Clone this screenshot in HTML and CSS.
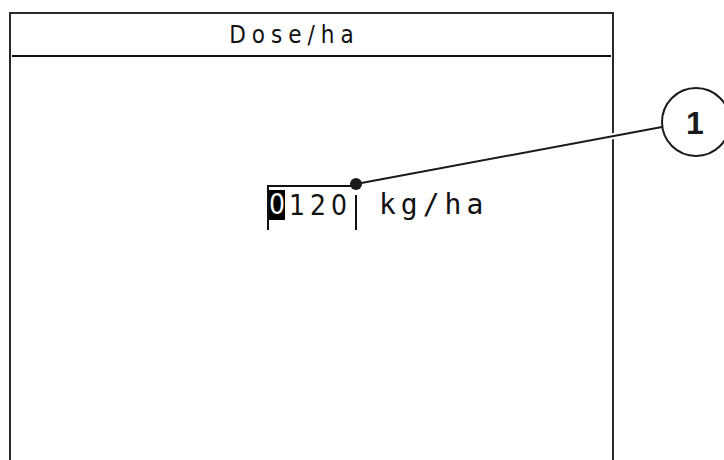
FILE: index.html
```html
<!DOCTYPE html>
<html lang="en">
<head>
  <meta charset="UTF-8">
  <meta name="viewport" content="width=device-width, initial-scale=1.0">
  <title>Dose/ha</title>
  <link rel="stylesheet" href="styles.css">
</head>
<body>
  <!-- Terminal screen -->
  <div class="screen">
    <div class="screen-title">Dose/ha</div>
    <div class="screen-body">
      <div class="entry">
        <div class="field"><span class="sel">0</span><span class="digits">120</span></div>
        <div class="cursor"></div>
        <div class="unit">kg/ha</div>
      </div>
    </div>
  </div>

  <!-- Callout -->
  <svg class="callout" width="724" height="460" viewBox="0 0 724 460">
    <line x1="356" y1="184" x2="662" y2="127" stroke="#fff" stroke-width="6"/>
    <line x1="356" y1="184" x2="662" y2="127" stroke="#1a1a1a" stroke-width="2"/>
    <circle cx="356" cy="184" r="6" fill="#1a1a1a"/>
    <circle cx="696" cy="122" r="34" fill="#fff" stroke="#1a1a1a" stroke-width="2"/>
    <text x="695" y="134" text-anchor="middle" class="callout-num">1</text>
  </svg>
</body>
</html>
```

FILE: styles.css
```css
body {
  margin: 0;
  background: #fff;
  font-family: "DejaVu Sans Condensed", "DejaVu Sans", sans-serif;
  color: #111;
}
.screen {
  margin: 12px 0 0 9px;
  width: 605px;
  height: 460px;
  box-sizing: border-box;
  border: 2px solid #2b2b2b;
  border-bottom: none;
}
.screen-title {
  margin: 0 1px;
  height: 39px;
  padding: 2px 34px 0 0;
  line-height: 39px;
  font-size: 24px;
  letter-spacing: 6px;
  text-align: center;
  border-bottom: 2px solid #111;
}
.screen-body {
  padding: 128px 0 0 256px;
}
.entry {
  display: flex;
  align-items: flex-start;
}
.field {
  display: flex;
  width: 83px;
  height: 40px;
  padding-top: 3px;
  border-top: 2px solid #111;
  border-left: 2px solid #111;
  font-size: 28px;
  line-height: 30px;
}
.sel {
  width: 19px;
  height: 30px;
  background: #000;
  color: #fff;
  text-align: center;
}
.digits {
  padding: 1px 0 0 4px;
  letter-spacing: 5px;
}
.cursor {
  margin: 10px 0 0 3px;
  height: 35px;
  border-left: 2px solid #111;
}
.unit {
  margin: 5px 0 0 22px;
  font-family: "DejaVu Sans Mono", monospace;
  font-size: 28px;
  line-height: 30px;
  letter-spacing: 5px;
}
.callout {
  position: absolute;
  left: 0;
  top: 0;
}
.callout-num {
  font-family: "Liberation Sans", Arial, sans-serif;
  font-weight: bold;
  font-size: 32px;
  fill: #1a1a1a;
}
```
